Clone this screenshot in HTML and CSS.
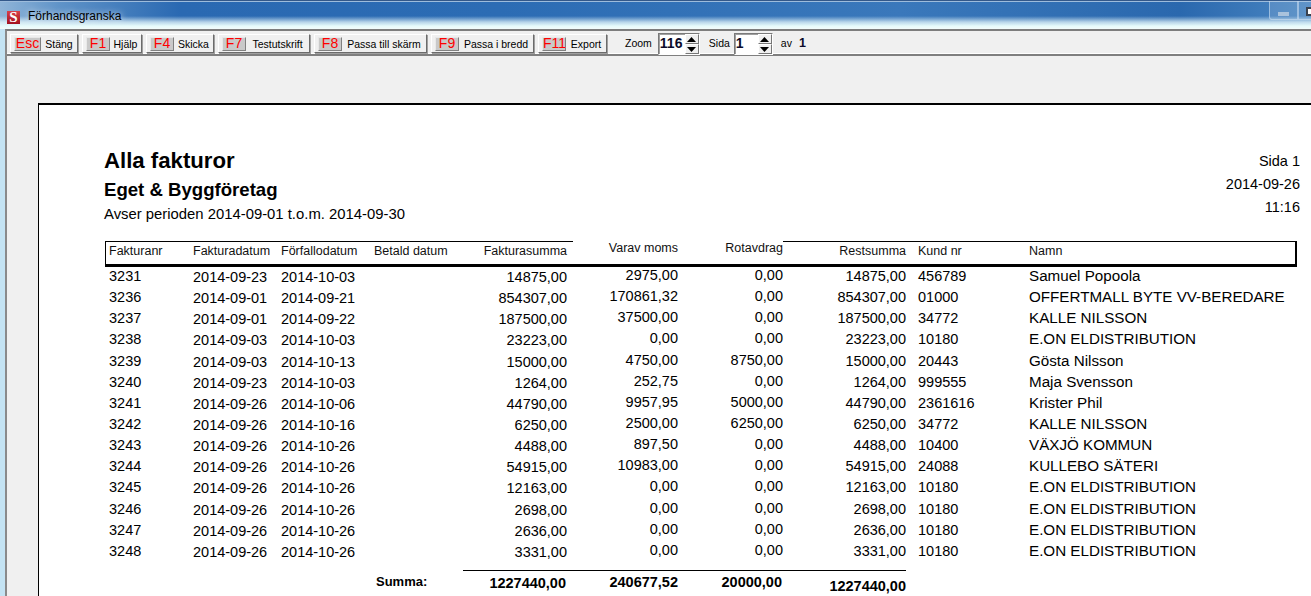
FILE: index.html
```html
<!DOCTYPE html>
<html lang="sv">
<head>
    <meta charset="UTF-8">
    <title>Förhandsgranska</title>
    <link rel="stylesheet" href="styles.css">
</head>
<body>
    <div class="titelrad">
        <span class="logo">S</span>
        <span class="titel">Förhandsgranska</span>
        <div class="fonsterknappar">
            <span class="minimera"><i></i></span>
            <span class="maximera"><i></i></span>
        </div>
    </div>

    <div class="fonster">
        <div class="verktyg">
            <div class="knapp k-esc"><span class="tangent t-esc">Esc</span><span class="etikett">Stäng</span></div>
            <div class="knapp k-f1"><span class="tangent">F1</span><span class="etikett">Hjälp</span></div>
            <div class="knapp k-f4"><span class="tangent">F4</span><span class="etikett">Skicka</span></div>
            <div class="knapp k-f7"><span class="tangent">F7</span><span class="etikett">Testutskrift</span></div>
            <div class="knapp k-f8"><span class="tangent">F8</span><span class="etikett">Passa till skärm</span></div>
            <div class="knapp k-f9"><span class="tangent">F9</span><span class="etikett">Passa i bredd</span></div>
            <div class="knapp k-f11"><span class="tangent">F11</span><span class="etikett">Export</span></div>
            <span class="falt-text zoom-text">Zoom</span>
            <div class="snurra s-zoom">
                <span class="varde">116</span>
                <span class="pilar"><b><svg width="9" height="5" viewBox="0 0 9 5"><path d="M4.5 0L9 5H0z"/></svg></b><b><svg width="9" height="5" viewBox="0 0 9 5"><path d="M0 0H9L4.5 5z"/></svg></b></span>
            </div>
            <span class="falt-text sida-text">Sida</span>
            <div class="snurra s-sida">
                <span class="varde">1</span>
                <span class="pilar"><b><svg width="9" height="5" viewBox="0 0 9 5"><path d="M4.5 0L9 5H0z"/></svg></b><b><svg width="9" height="5" viewBox="0 0 9 5"><path d="M0 0H9L4.5 5z"/></svg></b></span>
            </div>
            <span class="falt-text av-text">av</span>
            <span class="av-varde">1</span>
        </div>

        <div class="yta">
            <div class="sida">
                <div class="huvud">
                    <div>
                        <h1>Alla fakturor</h1>
                        <h2>Eget &amp; Byggföretag</h2>
                        <p class="period">Avser perioden 2014-09-01 t.o.m. 2014-09-30</p>
                    </div>
                    <div class="sidinfo">
                        <div>Sida 1</div>
                        <div>2014-09-26</div>
                        <div>11:16</div>
                    </div>
                </div>

                <div class="rad rubrik">
                    <span class="c1 topp">Fakturanr</span>
                    <span class="c2 topp">Fakturadatum</span>
                    <span class="c3 topp">Förfallodatum</span>
                    <span class="c4 topp">Betald datum</span>
                    <span class="c5 topp">Fakturasumma</span>
                    <span class="c6 hog">Varav moms</span>
                    <span class="c7 hog">Rotavdrag</span>
                    <span class="c8 topp">Restsumma</span>
                    <span class="c9 topp">Kund nr</span>
                    <span class="c10 topp">Namn</span>
                </div>

                <div id="rader" class="rader">
                    <div class="rad"><span class="c1 hog">3231</span><span class="c2">2014-09-23</span><span class="c3">2014-10-03</span><span class="c4"></span><span class="c5">14875,00</span><span class="c6 hogre">2975,00</span><span class="c7 hogre">0,00</span><span class="c8 hog">14875,00</span><span class="c9 hog">456789</span><span class="c10 hog">Samuel Popoola</span></div>
                    <div class="rad"><span class="c1 hog">3236</span><span class="c2">2014-09-01</span><span class="c3">2014-09-21</span><span class="c4"></span><span class="c5">854307,00</span><span class="c6 hogre">170861,32</span><span class="c7 hogre">0,00</span><span class="c8 hog">854307,00</span><span class="c9 hog">01000</span><span class="c10 hog">OFFERTMALL BYTE VV-BEREDARE</span></div>
                    <div class="rad"><span class="c1 hog">3237</span><span class="c2">2014-09-01</span><span class="c3">2014-09-22</span><span class="c4"></span><span class="c5">187500,00</span><span class="c6 hogre">37500,00</span><span class="c7 hogre">0,00</span><span class="c8 hog">187500,00</span><span class="c9 hog">34772</span><span class="c10 hog">KALLE NILSSON</span></div>
                    <div class="rad"><span class="c1 hog">3238</span><span class="c2">2014-09-03</span><span class="c3">2014-10-03</span><span class="c4"></span><span class="c5">23223,00</span><span class="c6 hogre">0,00</span><span class="c7 hogre">0,00</span><span class="c8 hog">23223,00</span><span class="c9 hog">10180</span><span class="c10 hog">E.ON ELDISTRIBUTION</span></div>
                    <div class="rad"><span class="c1 hog">3239</span><span class="c2">2014-09-03</span><span class="c3">2014-10-13</span><span class="c4"></span><span class="c5">15000,00</span><span class="c6 hogre">4750,00</span><span class="c7 hogre">8750,00</span><span class="c8 hog">15000,00</span><span class="c9 hog">20443</span><span class="c10 hog">Gösta Nilsson</span></div>
                    <div class="rad"><span class="c1 hog">3240</span><span class="c2">2014-09-23</span><span class="c3">2014-10-03</span><span class="c4"></span><span class="c5">1264,00</span><span class="c6 hogre">252,75</span><span class="c7 hogre">0,00</span><span class="c8 hog">1264,00</span><span class="c9 hog">999555</span><span class="c10 hog">Maja Svensson</span></div>
                    <div class="rad"><span class="c1 hog">3241</span><span class="c2">2014-09-26</span><span class="c3">2014-10-06</span><span class="c4"></span><span class="c5">44790,00</span><span class="c6 hogre">9957,95</span><span class="c7 hogre">5000,00</span><span class="c8 hog">44790,00</span><span class="c9 hog">2361616</span><span class="c10 hog">Krister Phil</span></div>
                    <div class="rad"><span class="c1 hog">3242</span><span class="c2">2014-09-26</span><span class="c3">2014-10-16</span><span class="c4"></span><span class="c5">6250,00</span><span class="c6 hogre">2500,00</span><span class="c7 hogre">6250,00</span><span class="c8 hog">6250,00</span><span class="c9 hog">34772</span><span class="c10 hog">KALLE NILSSON</span></div>
                    <div class="rad"><span class="c1 hog">3243</span><span class="c2">2014-09-26</span><span class="c3">2014-10-26</span><span class="c4"></span><span class="c5">4488,00</span><span class="c6 hogre">897,50</span><span class="c7 hogre">0,00</span><span class="c8 hog">4488,00</span><span class="c9 hog">10400</span><span class="c10 hog">VÄXJÖ KOMMUN</span></div>
                    <div class="rad"><span class="c1 hog">3244</span><span class="c2">2014-09-26</span><span class="c3">2014-10-26</span><span class="c4"></span><span class="c5">54915,00</span><span class="c6 hogre">10983,00</span><span class="c7 hogre">0,00</span><span class="c8 hog">54915,00</span><span class="c9 hog">24088</span><span class="c10 hog">KULLEBO SÄTERI</span></div>
                    <div class="rad"><span class="c1 hog">3245</span><span class="c2">2014-09-26</span><span class="c3">2014-10-26</span><span class="c4"></span><span class="c5">12163,00</span><span class="c6 hogre">0,00</span><span class="c7 hogre">0,00</span><span class="c8 hog">12163,00</span><span class="c9 hog">10180</span><span class="c10 hog">E.ON ELDISTRIBUTION</span></div>
                    <div class="rad"><span class="c1 hog">3246</span><span class="c2">2014-09-26</span><span class="c3">2014-10-26</span><span class="c4"></span><span class="c5">2698,00</span><span class="c6 hogre">0,00</span><span class="c7 hogre">0,00</span><span class="c8 hog">2698,00</span><span class="c9 hog">10180</span><span class="c10 hog">E.ON ELDISTRIBUTION</span></div>
                    <div class="rad"><span class="c1 hog">3247</span><span class="c2">2014-09-26</span><span class="c3">2014-10-26</span><span class="c4"></span><span class="c5">2636,00</span><span class="c6 hogre">0,00</span><span class="c7 hogre">0,00</span><span class="c8 hog">2636,00</span><span class="c9 hog">10180</span><span class="c10 hog">E.ON ELDISTRIBUTION</span></div>
                    <div class="rad"><span class="c1 hog">3248</span><span class="c2">2014-09-26</span><span class="c3">2014-10-26</span><span class="c4"></span><span class="c5">3331,00</span><span class="c6 hogre">0,00</span><span class="c7 hogre">0,00</span><span class="c8 hog">3331,00</span><span class="c9 hog">10180</span><span class="c10 hog">E.ON ELDISTRIBUTION</span></div>
                </div>

                <div class="rad summa">
                    <span class="summa-text">Summa:</span>
                    <span class="c5 linje">1227440,00</span>
                    <span class="c6 linje hog">240677,52</span>
                    <span class="c7 linje hog">20000,00</span>
                    <span class="c8 linje lag">1227440,00</span>
                </div>
            </div>
        </div>
    </div>
</body>
</html>
```

FILE: styles.css
```css
html, body{
    margin: 0;
    height: 596px;
    overflow: hidden;
}
body{
    font-family: "Liberation Sans", Arial, sans-serif;
    background: #c4e3f3;
    color: #000;
}

/* titelrad */
.titelrad{
    height: 29px;
    box-sizing: border-box;
    display: flex;
    align-items: flex-start;
    padding: 7px 0 0 7px;
    border-top: 1px solid #33588a;
    box-shadow: inset 0 1px 0 #9dbcdc;
    background:
        linear-gradient(to bottom, rgba(255,255,255,0) 0, rgba(255,255,255,0) 15px, rgba(240,255,255,.7) 21px, #e6fbfb 25px, #f3fbfb 28px),
        linear-gradient(to right, #8fb4d8 0, #5f93c8 60px, #2a69b2 180px, #2c6cb4 500px, #3a78bb 900px, #2a68ae 1180px, #4a86c2 1311px);
}
.logo{
    width: 13px;
    height: 13px;
    margin-top: 3px;
    background: linear-gradient(to bottom, #d8404a, #a3121f);
    color: #fff;
    font: bold 15px/13px "Liberation Serif", serif;
    text-align: center;
}
.titel{
    margin-left: 8px;
    font-size: 12px;
    line-height: 16px;
    color: #000;
    text-shadow: 0 0 6px rgba(255,255,255,.9);
}
.fonsterknappar{
    display: flex;
    margin-left: auto;
    margin-top: -7px;
    height: 19px;
}
.fonsterknappar span{
    display: flex;
    align-items: flex-start;
    height: 19px;
    box-sizing: border-box;
    border: 1px solid rgba(200,220,240,.6);
    border-top: 0;
    background: rgba(255,255,255,.12);
}
.minimera{
    width: 29px;
    justify-content: center;
    border-radius: 0 0 0 3px;
}
.minimera i{
    width: 11px;
    height: 4px;
    margin-top: 11px;
    background: #a9c2dc;
}
.maximera{
    width: 13px;
    border-right: 0 !important;
}
.maximera i{
    flex-shrink: 0;
    width: 10px;
    height: 5px;
    margin: 6px 0 0 7px;
    border: 2px solid #39424f;
    background: #fff;
}

/* ventana */
.fonster{
    height: 567px;
    margin-left: 5px;
    box-sizing: border-box;
    border-left: 2px solid #8a8a8a;
    border-top: 2px solid #7d7d7d;
    background: #f0f0f0;
    display: flex;
    flex-direction: column;
}
.verktyg{
    height: 25px;
    box-sizing: border-box;
    display: flex;
    align-items: flex-start;
    padding: 3px 0 0 3px;
    border-bottom: 2px solid #7f7f7f;
    box-shadow: inset 0 -1px 0 #fff;
    font-size: 10.5px;
}
.knapp{
    height: 19px;
    box-sizing: border-box;
    margin-right: 4px;
    display: flex;
    align-items: center;
    padding-left: 3px;
    background: #f0f0f0;
    border: 1px solid;
    border-color: #fff #6b6b6b #6b6b6b #fff;
    box-shadow: 1px 1px 0 #a0a0a0;
}
.k-esc{ width: 68px; }
.k-f1{ width: 60px; }
.k-f4{ width: 68px; }
.k-f7{ width: 92px; }
.k-f8{ width: 113px; }
.k-f9{ width: 103px; }
.k-f11{ width: 69px; margin-right: 0; }
.tangent{
    width: 24px;
    height: 14px;
    box-sizing: border-box;
    background: #c9c9c9;
    border: 1px solid;
    border-color: #e8e8e8 #808080 #808080 #e8e8e8;
    color: #f00;
    font-size: 14px;
    line-height: 10px;
    text-align: center;
    flex-shrink: 0;
}
.t-esc{ width: 27px; }
.etikett{
    flex: 1;
    text-align: center;
    white-space: nowrap;
}
.falt-text{
    line-height: 19px;
}
.zoom-text{ margin-left: 18px; }
.sida-text{ margin-left: 9px; }
.av-text{ margin-left: 8px; }
.av-varde{
    margin-left: 7px;
    font-size: 12.5px;
    font-weight: bold;
    line-height: 18px;
    color: #0b0b2a;
}
.snurra{
    height: 22px;
    margin-top: -1px;
    box-sizing: border-box;
    display: flex;
    justify-content: space-between;
    background: #fff;
    border: 1px solid;
    border-color: #7a7a7a #fff #fff #7a7a7a;
    box-shadow: inset 1px 1px 0 #a0a0a0;
}
.s-zoom{ width: 42px; margin-left: 6px; }
.s-sida{ width: 39px; margin-left: 4px; }
.varde{
    font-size: 14px;
    font-weight: bold;
    line-height: 19px;
    padding-left: 1px;
    color: #0b0b2a;
}
.pilar{
    width: 14px;
    display: flex;
    flex-direction: column;
}
.pilar b{
    flex: 1;
    display: flex;
    align-items: center;
    justify-content: center;
    background: #f0f0f0;
    border: 1px solid;
    border-color: #fff #777 #777 #fff;
}

/* hoja */
.yta{
    flex: 1;
    padding: 47px 0 0 31px;
    overflow: hidden;
}
.sida{
    height: 600px;
    background: #fff;
    border-left: 1px solid #000;
    border-top: 2px solid #000;
    padding: 42px 14px 0 65px;
}
.huvud{
    display: flex;
    justify-content: space-between;
    height: 94px;
}
h1{
    margin: 0;
    font-size: 22.2px;
    line-height: 27px;
}
h2{
    margin: 2px 0 0;
    font-size: 18.6px;
    line-height: 27px;
}
.period{
    margin: 0;
    font-size: 14.85px;
    line-height: 23px;
}
.sidinfo{
    text-align: right;
    font-size: 14.5px;
    line-height: 23px;
    margin-top: 3px;
    margin-right: -3px;
}

/* tabell */
.rad{
    display: grid;
    grid-template-columns: 88px 88px 93px 86px 113px 107px 103px 129px 117px 268px;
    margin-left: 1px;
    font-size: 14.5px;
    width: 1192px;
    height: 21.15px;
    line-height: 21px;
    white-space: nowrap;
}
.rad span{
    box-sizing: border-box;
}
.c1{ padding-left: 4px; }
.c5{ grid-column: 5; text-align: right; padding-right: 6px; }
.c6{ grid-column: 6; text-align: right; padding-right: 2px; }
.c7{ grid-column: 7; text-align: right; }
.c8{ grid-column: 8; text-align: right; padding-right: 6px; }
.c9{ grid-column: 9; padding-left: 6px; }
.c10{ grid-column: 10; font-size: 15.2px; line-height: 19px; }
.hog{ margin-top: -1px; }
.hogre{ margin-top: -2px; }
.lag{ padding-top: 3px; }

.rubrik{
    height: 26px;
    box-sizing: border-box;
    grid-template-columns: 87px 88px 93px 86px 113px 107px 103px 129px 117px 266px;
    font-size: 12.5px;
    line-height: 19px;
    border-left: 1px solid #000;
    border-right: 2px solid #000;
    border-bottom: 3px solid #000;
    color: #111;
}
.rubrik .c1{ padding-left: 3px; }
.rubrik .c10{ font-size: 12.5px; line-height: 19px; }
.rubrik .topp{
    border-top: 1px solid #000;
    height: 23px;
}
.rubrik .hog{
    margin-top: -2px;
}
.rubrik .c6{ padding-right: 0; margin-right: 2px; }
.summa{
    margin-top: 7px;
    font-weight: bold;
    height: 26px;
    line-height: 24px;
}
.summa-text{
    grid-column: 4;
    font-size: 13px;
    margin-left: 2px;
}
.linje{
    border-top: 1px solid #000;
}
.summa .hog{
    margin-top: 0;
    line-height: 22px;
}
.summa .c5{ margin-left: 3px; padding-right: 7px; }
.summa .c6{ padding-right: 0; margin-right: 0; padding-right: 2px; }
.summa .c7{ padding-right: 1px; }
.summa .c8{ margin-right: 6px; padding-right: 0; }
```
